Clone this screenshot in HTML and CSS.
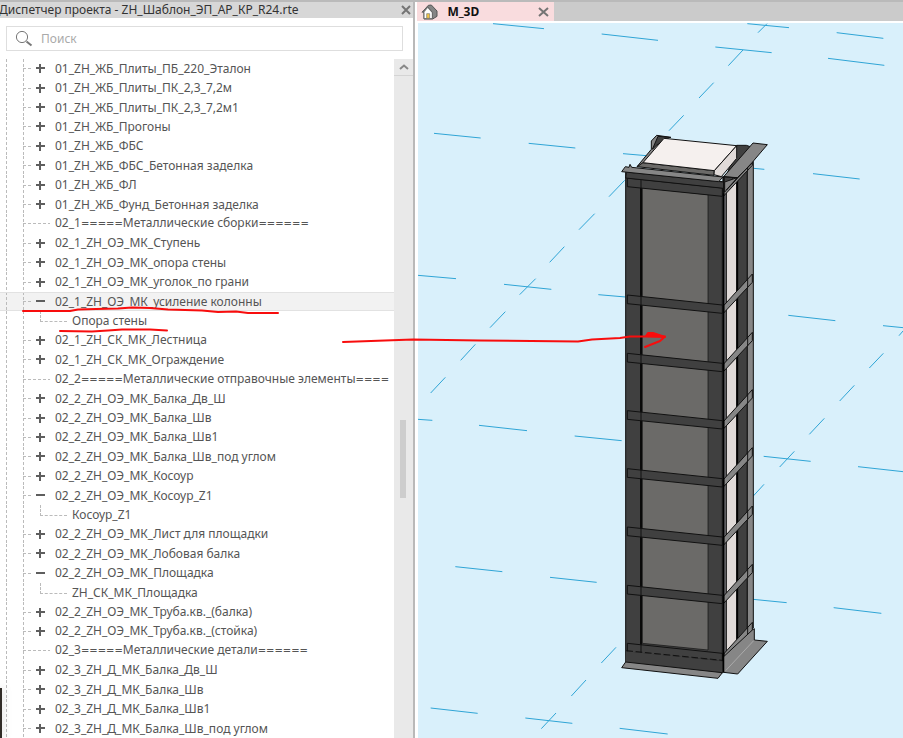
FILE: index.html
```
<!DOCTYPE html>
<html lang="ru">
<head>
<meta charset="utf-8">
<title>M_3D</title>
<link rel="stylesheet" href="styles.css">
</head>
<body>
<div class="app">
  <aside class="browser">
    <header class="titlebar">
      <h1 class="title">Диспетчер проекта - ZH_Шаблон_ЭП_АР_КР_R24.rte</h1>
      <button class="close" type="button" aria-label="Закрыть диспетчер"><svg width="10" height="10" viewBox="0 0 10 10"><path d="M1 1L9 9M9 1L1 9"/></svg></button>
    </header>
    <div class="search">
      <svg class="search-icon" width="19" height="18" viewBox="0 0 19 18"><circle cx="7" cy="7" r="5.6"/><path class="handle" d="M11.5 11.5L16.5 15.5"/></svg>
      <input class="search-input" type="search" placeholder="Поиск" aria-label="Поиск">
    </div>
    <div class="tree-area">
      <ul class="tree" id="tree"></ul>
      <div class="scrollbar">
        <button class="scroll-up" type="button" aria-label="Вверх"><svg width="10" height="6" viewBox="0 0 10 6"><path d="M1 5L5 1.5L9 5"/></svg></button>
        <div class="thumb"></div>
      </div>
    </div>
    <div class="edge-shade"></div>
  </aside>
  <main class="view">
    <nav class="tabs">
      <div class="tab">
        <svg class="home" width="17" height="16" viewBox="0 0 51 48"><path d="M4 24L22 4L31 3L48 21V37L35 45H9V25Z" fill="#858585" stroke="#555" stroke-width="3"/><path d="M9 26L20 12L33 26V44H9Z" fill="#fff"/><path d="M3 26L20 8L35 26M9 26V44H34V26" fill="none" stroke="#666" stroke-width="3"/><path d="M17 29H26V43H17Z" fill="#f3c545" stroke="#777" stroke-width="2"/></svg>
        <a class="tab-name" href="#scene">M_3D</a>
        <button class="close" type="button" aria-label="Закрыть вид"><svg width="11" height="10" viewBox="0 0 11 10"><path d="M1 1L10 9M10 1L1 9"/></svg></button>
      </div>
    </nav>
    <div class="canvas" id="scene">
      <svg class="scene" viewBox="15 69 1455 2145" preserveAspectRatio="xMinYMin slice">
        <g class="axes">
          <path d="M240 71L393 86M566 102L735 121M907 141L1076 158M1003 71L1128 83M1271 98L1411 115M1245 175L1414 196M63 400L203 414M347 430L487 444M630 461L700 467M1022 505L1054 508M1200 521L1340 537M15 826L129 836M273 853L415 868M556 884L638 891M1126 946L1267 962M1410 977L1470 983"/>
          <path d="M1062 71L1035 98M990 150L946 197M902 248L858 294M812 346L768 392M635 541L588 590M545 641L498 689M454 740L410 787M368 836L320 884M277 935L231 983M187 1033L143 1081M1470 993L1458 1007M1411 1060L1369 1104"/>
          <path transform="translate(0 1104)" d="M15 154L58 157M198 172L342 188M485 204L626 218M127 596L268 611M411 628L551 643M1052 265L1193 280M1335 296L1470 311M1020 694L1121 704M1262 719L1405 736M53 1020L194 1036M337 1050L478 1066M620 1081L764 1098"/>
          <path transform="translate(0 1104)" d="M97 28L53 75M1324 52L1280 99M1234 151L1189 199M1144 250L1100 297M1053 349L1020 385M609 838L565 885M519 936L475 984M429 1035L385 1082"/>
        </g>
        <g class="column">
          <!-- rear bracket and cap -->
          <path class="steel" d="M715 448V423L731 406L774 412L753 416L690 492L672 500Z"/>
          <path class="dark" d="M735 409L770 412L730 436L718 448Z"/>
          <path class="dark" d="M971 436H1000L1012 440L1003 520L940 530Z"/>
          <path class="panel" d="M690 488L904 512L903 526L672 500Z"/>
          <path class="cap" d="M753 415L971 437L904 512L690 488Z"/>
          <path class="cap-side" d="M971 437V475L925 530L903 524L904 512Z"/>
          <!-- shaft -->
          <path class="dark" d="M638 515L928 545V2019L638 1986Z"/>
          <path class="dark nostroke" d="M928 530L1019 485V620L928 700Z"/>
          <path class="panel thin" d="M688 562L885 584V1950L688 1930Z"/>
          <path class="seam" d="M684 540V1956"/>
          <path class="strip" d="M930 580L940 568V1960L930 1970Z"/>
          <path class="pale" d="M940 570L971 538V1928L940 1960Z"/>
          <path class="dark" d="M973 536L1003 504V1895L973 1928Z"/>
          <path class="steel" d="M1003 504L1021 484V1884L1003 1900Z"/>
          <path class="seam" d="M973 536V1928"/>
          <g id="bands"></g>
          <path class="seam" d="M932 530V2015"/>
          <!-- top flanges -->
          <path class="dark" d="M640 516L932 546V565L638 534Z"/>
          <path class="steel" d="M626 515L637 500L648 502L651 493L656 502L930 531L917 545Z"/>
          <path class="steel" d="M932 530L1020 429L1063 434L1017 488L935 576V546L972 533Z"/>
          <path class="line" d="M932 530L972 534L1019 488M932 530V580M940 570L972 534"/>
          <!-- base flanges -->
          <path class="dark nostroke" d="M639 1954L930 1984V2019L638 1987Z"/>
          <path class="dash" d="M640 1952L928 1981"/>
          <path class="steel" d="M638 1986L928 2018L915 2035L626 2003Z"/>
          <path class="steel" d="M932 1970L1018 1890L1024 1886V1920L1063 1924L974 2022L932 2017Z"/>
          <path class="fold" d="M938 2012L1022 1922"/>
          <path class="seam" d="M931 1960V2018"/>
        </g>
      </svg>
    </div>
  </main>
  <svg class="markup" viewBox="0 0 903 738" preserveAspectRatio="xMinYMin slice">
    <path d="M23 311H70L78 309.500L96 309L118 308.500L132 307.500L150 308L168 309.500L202 310.500L218 312L236 311.500L248 313L278 313"/>
    <path d="M60 331L92 331.500L108 330.500L122 329.500L150 329.500L167 330.500"/>
    <path d="M343 342L413 339.500L480 340.500L578 341.500L592 339.500L620 338L630 336.500L665 336.500L660 341L645 347"/>
    <path class="tip" d="M648 333L653 333L665 337L646 336Z"/>
  </svg>
</div>
<script src="app.js"></script>
</body>
</html>
```
FILE: styles.css
```
* { box-sizing: border-box; }
body {
  margin: 0;
  font-family: "Noto Sans", "Open Sans", sans-serif;
  font-size: 12px;
  color: #555;
}
button { margin: 0; padding: 0; border: 0; background: none; display: flex; align-items: center; justify-content: center; }
.app {
  position: relative;
  display: grid;
  grid-template-columns: 46% 1fr;
  height: 100vh;
  overflow: hidden;
  background: #fff;
  border-top: 2px solid #bababa;
}
.browser {
  position: relative;
  display: flex;
  flex-direction: column;
  min-width: 0;
  min-height: 0;
  border-right: 2px solid #b9b9b9;
}
.titlebar {
  display: flex;
  align-items: center;
  justify-content: space-between;
  height: 16px;
  background: #d7d7d7;
}
.title {
  margin: 0 0 0 -1px;
  font-size: 12px;
  line-height: 16px;
  font-weight: 400;
  color: #333;
  white-space: nowrap;
}
.close { width: 14px; height: 14px; }
.close path { fill: none; stroke: #747474; stroke-width: 2; }
.search {
  display: flex;
  align-items: center;
  gap: 7px;
  height: 25px;
  margin: 8px 10px 8px 6px;
  padding-left: 8px;
  border: 1px solid #dedede;
}
.search-icon { fill: none; stroke: #777; stroke-width: 1; flex: none; }
.search-icon .handle { stroke-width: 2; }
.search-input {
  flex: 1;
  min-width: 0;
  padding: 0;
  border: 0;
  outline: 0;
  background: none;
  font: inherit;
}
.search-input::placeholder { color: #aaa; opacity: 1; }
.tree-area { display: flex; flex: 1; min-height: 0; }
.tree {
  display: flex;
  flex-direction: column;
  flex: 1;
  min-width: 0;
  margin: 0;
  padding: 0;
  list-style: none;
  overflow: hidden;
}
.row {
  display: flex;
  flex: 1;
  align-items: center;
  min-height: 0;
  padding-left: 23px;
  line-height: 18px;
  white-space: nowrap;
  background-image: repeating-linear-gradient(#bbb 0 3px, transparent 3px 5px), repeating-linear-gradient(#bbb 0 3px, transparent 3px 5px);
  background-size: 1px 100%;
  background-position: 6px 0, 23px 0;
  background-repeat: no-repeat;
}
.row.selected { background-color: #f2f2f2; box-shadow: inset 0 1px #e2e2e2, inset 0 -1px #e2e2e2; }
.rule { font-family: "DejaVu Sans", sans-serif; font-size: 10px; }
.branch { flex: none; width: 9px; height: 1px; background: repeating-linear-gradient(90deg, #bbb 0 3px, transparent 3px 5px); }
.branch.leaf { width: 27px; margin-right: 5px; }
.child { padding-left: 40px; }
.elbow {
  flex: none;
  align-self: flex-start;
  width: 27px;
  height: 55%;
  margin-right: 5px;
  border-left: 1px dashed #bbb;
  border-bottom: 1px dashed #bbb;
}
.toggle { flex: none; width: 17px; height: 16px; margin-right: 6px; }
.toggle path { stroke: #5e5e5e; stroke-width: 2; }
.scrollbar { flex: none; width: 19px; background: #e9e9e9; }
.scroll-up { width: 100%; height: 17px; border-bottom: 1px solid #d4d4d4; }
.scroll-up path { fill: none; stroke: #888; stroke-width: 2; }
.thumb { width: 6px; height: 78px; margin: 344px 0 0 6px; background: #cdcdcd; }
.edge-shade {
  position: absolute;
  left: 0;
  bottom: 0;
  width: 2px;
  height: 50px;
  background: #302b26;
  box-shadow: 0 0 8px #aaa;
}
.view { display: flex; flex-direction: column; min-width: 0; min-height: 0; padding-left: 2px; }
.tabs { display: flex; height: 19px; background: #cbcbcb; }
.tab { display: flex; align-items: center; width: 137px; padding: 0 4px 0 4px; background: #f9dcde; }
.tab-name {
  flex: 1;
  padding-left: 9px;
  font-weight: 700;
  line-height: 18px;
  color: #111;
  text-decoration: none;
}
.canvas { flex: 1; min-height: 0; margin: 2px 0 0 1px; background: #d9f0fb; }
.scene { display: block; width: 100%; height: 100%; }
.axes { fill: none; stroke: #2fa5d6; stroke-width: 3; }
.column { stroke: #111; stroke-width: 3; stroke-linejoin: round; }
.dark { fill: #404040; }
.panel { fill: #6b6a68; }
.thin { stroke-width: 2; }
.steel { fill: #868686; }
.strip { fill: #85858a; }
.pale { fill: #e0dad8; }
.cap { fill: #f5f0ee; }
.cap-side { fill: #e0dad8; }
.line { fill: none; }
.nostroke { stroke: none; }
.seam { fill: none; stroke: #000; stroke-width: 5; }
.dash { fill: none; stroke-dasharray: 20 8; }
.fold { fill: none; stroke: #aaa; }
.markup {
  position: absolute;
  left: 0;
  top: -2px;
  width: 100%;
  height: 100vh;
  pointer-events: none;
  fill: none;
  stroke: #f80d0d;
  stroke-width: 2;
  stroke-linecap: round;
  stroke-linejoin: round;
}
.tip { fill: #f80d0d; }
```
FILE: app.js
```
// Prefix of each item: "+" collapsed, "-" expanded, "." leaf, ">" child, "*" expanded and selected
const items = [
  "+01_ZH_ЖБ_Плиты_ПБ_220_Эталон",
  "+01_ZH_ЖБ_Плиты_ПК_2,3_7,2м",
  "+01_ZH_ЖБ_Плиты_ПК_2,3_7,2м1",
  "+01_ZH_ЖБ_Прогоны",
  "+01_ZH_ЖБ_ФБС",
  "+01_ZH_ЖБ_ФБС_Бетонная заделка",
  "+01_ZH_ЖБ_ФЛ",
  "+01_ZH_ЖБ_Фунд_Бетонная заделка",
  ".02_1=====Металлические сборки======",
  "+02_1_ZH_ОЭ_МК_Ступень",
  "+02_1_ZH_ОЭ_МК_опора стены",
  "+02_1_ZH_ОЭ_МК_уголок_по грани",
  "*02_1_ZH_ОЭ_МК_усиление колонны",
  ">Опора стены",
  "+02_1_ZH_СК_МК_Лестница",
  "+02_1_ZH_СК_МК_Ограждение",
  ".02_2=====Металлические отправочные элементы====",
  "+02_2_ZH_ОЭ_МК_Балка_Дв_Ш",
  "+02_2_ZH_ОЭ_МК_Балка_Шв",
  "+02_2_ZH_ОЭ_МК_Балка_Шв1",
  "+02_2_ZH_ОЭ_МК_Балка_Шв_под углом",
  "+02_2_ZH_ОЭ_МК_Косоур",
  "-02_2_ZH_ОЭ_МК_Косоур_Z1",
  ">Косоур_Z1",
  "+02_2_ZH_ОЭ_МК_Лист для площадки",
  "+02_2_ZH_ОЭ_МК_Лобовая балка",
  "-02_2_ZH_ОЭ_МК_Площадка",
  ">ZH_СК_МК_Площадка",
  "+02_2_ZH_ОЭ_МК_Труба.кв._(балка)",
  "+02_2_ZH_ОЭ_МК_Труба.кв._(стойка)",
  ".02_3=====Металлические детали======",
  "+02_3_ZH_Д_МК_Балка_Дв_Ш",
  "+02_3_ZH_Д_МК_Балка_Шв",
  "+02_3_ZH_Д_МК_Балка_Шв1",
  "+02_3_ZH_Д_МК_Балка_Шв_под углом"
];

const toggle = (open, name) =>
  `<button class="toggle" type="button" aria-label="${name}" aria-expanded="${open}"><svg width="9" height="9" viewBox="0 0 9 9"><path d="M0 4H9${open ? "" : "M4 0V9"}"/></svg></button>`;

document.getElementById("tree").innerHTML = items.map(item => {
  const kind = item[0];
  const name = item.slice(1);
  const label = `<span>${name.replace(/=+/g, run => `<span class="rule">${run}</span>`)}</span>`;
  if (kind === ">") return `<li class="row child"><span class="elbow"></span>${label}</li>`;
  if (kind === ".") return `<li class="row"><span class="branch leaf"></span>${label}</li>`;
  return `<li class="row${kind === "*" ? " selected" : ""}"><span class="branch"></span>${toggle(kind !== "+", name)}${label}</li>`;
}).join("");

// Batten plates around the shaft, listed by the height of their left corner
document.getElementById("bands").innerHTML = [534, 885, 1060, 1232, 1406, 1581, 1756, 1930].map(y =>
  `<path class="dark" d="M643 ${y}L928 ${y + 30}V${y + 55}L643 ${y + 26}Z"/>` +
  `<path class="line" d="M684 ${y}V${y + 30}"/>` +
  `<path class="steel" d="M932 ${y + 32}L1018 ${y - 63}V${y - 38}L932 ${y + 54}Z"/>` +
  `<path class="line" d="M1004 ${y - 48}V${y - 22}"/>`
).join("");
```
